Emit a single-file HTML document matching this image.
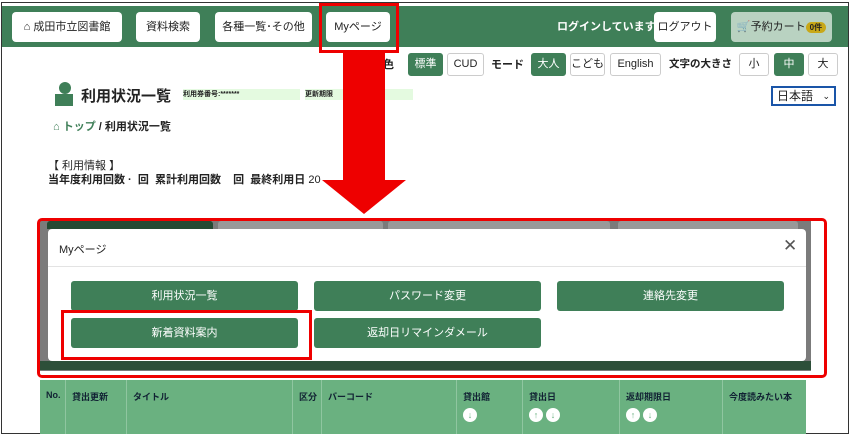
<!DOCTYPE html>
<html><head><meta charset="utf-8"><style>
*{margin:0;padding:0;box-sizing:border-box}
body{width:851px;height:435px;background:#fff;position:relative;overflow:hidden;font-family:"Liberation Sans","Noto Sans CJK JP",sans-serif;color:#222}
.a{position:absolute;white-space:nowrap}
.frame{left:1px;top:2px;width:848px;height:432px;border:1px solid #333}
.hdr{left:2px;top:6px;width:846px;height:41px;background:#3f7f58}
.hb{background:#fff;border-radius:4px;font-size:11px;text-align:center;line-height:30px;height:30px;top:12px;color:#222}
.tb{top:53px;height:23px;border:1px solid #ccc;border-radius:3px;background:#fff;font-size:11px;text-align:center;line-height:21px}
.tb.g{background:#3f7f58;color:#fff;border-color:#3f7f58}
.lbl{font-size:11px;font-weight:bold;top:56px}
.mb{height:30px;background:#3f7f58;color:#fff;border-radius:3px;font-size:11px;text-align:center;line-height:30px;width:227px}
.th{top:380px;height:54px;background:#6ab180;font-size:9px;color:#123;font-weight:bold;padding:10px 0 0 6px;border-right:1px solid #8fc6a0}
.ci{display:inline-block;width:14px;height:14px;border-radius:50%;background:#fff;color:#6ab180;font-size:9px;text-align:center;line-height:14px;margin-right:3px}
</style></head><body>
<div class="a frame"></div>
<div class="a hdr"></div>
<div class="a hb" style="left:12px;width:110px">&#8962; 成田市立図書館</div>
<div class="a hb" style="left:136px;width:64px">資料検索</div>
<div class="a hb" style="left:215px;width:97px">各種一覧･その他</div>
<div class="a hb" style="left:326px;width:64px">Myページ</div>
<div class="a" style="left:319px;top:3px;width:80px;height:50px;border:3px solid #e00"></div>
<div class="a" style="left:557px;top:18px;font-size:11px;font-weight:bold;color:#fff">ログインしています</div>
<div class="a hb" style="left:654px;width:62px">ログアウト</div>
<div class="a hb" style="left:731px;width:101px;background:#b9d2c1;font-size:11px">&#128722;予約カート<span style="background:#c8a818;border-radius:8px;font-size:8px;font-weight:bold;padding:1px 4px">0件</span></div>
<div class="a lbl" style="left:372px">配色</div>
<div class="a tb g" style="left:408px;width:35px">標準</div>
<div class="a tb" style="left:447px;width:37px">CUD</div>
<div class="a lbl" style="left:491px">モード</div>
<div class="a tb g" style="left:531px;width:35px">大人</div>
<div class="a tb" style="left:570px;width:35px">こども</div>
<div class="a tb" style="left:610px;width:51px">English</div>
<div class="a lbl" style="left:669px;font-size:10.5px">文字の大きさ</div>
<div class="a tb" style="left:739px;width:30px">小</div>
<div class="a tb g" style="left:774px;width:30px">中</div>
<div class="a tb" style="left:808px;width:30px">大</div>
<div class="a" style="left:59px;top:82px;width:12px;height:12px;border-radius:50%;background:#3f7f58"></div>
<div class="a" style="left:55px;top:94px;width:18px;height:12px;background:#3f7f58"></div>
<div class="a" style="left:81px;top:85px;font-size:15px;font-weight:bold">利用状況一覧</div>
<div class="a" style="left:183px;top:89px;width:117px;height:11px;background:#e4fae0;font-size:7px;font-weight:bold;line-height:11px">利用券番号:*******</div>
<div class="a" style="left:305px;top:89px;width:108px;height:11px;background:#e4fae0;font-size:7px;font-weight:bold;line-height:11px">更新期限</div>
<div class="a" style="left:771px;top:86px;width:65px;height:20px;border:2px solid #1a55a8;font-size:12px;line-height:16px;padding-left:4px">日本語 <span style="float:right;margin-right:4px;font-size:9px">&#8964;</span></div>
<div class="a" style="left:53px;top:118px;font-size:11px;font-weight:bold"><span style="color:#3f7f58">&#8962; トップ</span> / 利用状況一覧</div>
<div class="a" style="left:48px;top:157px;font-size:11px">【 利用情報 】</div>
<div class="a" style="left:48px;top:171px;font-size:11px;font-weight:bold">当年度利用回数 · &nbsp;回 &nbsp;累計利用回数 &nbsp;&nbsp;&nbsp;回 &nbsp;最終利用日 <span style="font-weight:normal">20</span></div>
<div class="a" style="left:343px;top:53px;width:42px;height:128px;background:#e00"></div>
<div class="a" style="left:322px;top:180px;width:0;height:0;border-left:42px solid transparent;border-right:42px solid transparent;border-top:34px solid #e00"></div>
<div class="a" style="left:40px;top:221px;width:771px;height:150px;background:#7b7b7b"></div>
<div class="a" style="left:47px;top:221px;width:166px;height:8px;background:#254a33;border-radius:3px 3px 0 0"></div>
<div class="a" style="left:218px;top:221px;width:165px;height:8px;background:#999;border-radius:3px 3px 0 0"></div>
<div class="a" style="left:388px;top:221px;width:222px;height:8px;background:#999;border-radius:3px 3px 0 0"></div>
<div class="a" style="left:618px;top:221px;width:180px;height:8px;background:#999;border-radius:3px 3px 0 0"></div>
<div class="a" style="left:40px;top:361px;width:771px;height:9px;background:#2d4f39"></div>
<div class="a" style="left:48px;top:229px;width:758px;height:132px;background:#fff;border-radius:4px"></div>
<div class="a" style="left:48px;top:266px;width:758px;height:1px;background:#e3e3e3"></div>
<div class="a" style="left:59px;top:241px;font-size:11px">Myページ</div>
<div class="a" style="left:783px;top:236px;font-size:17px;color:#555;font-weight:normal">&#10005;</div>
<div class="a mb" style="left:71px;top:281px">利用状況一覧</div>
<div class="a mb" style="left:314px;top:281px">パスワード変更</div>
<div class="a mb" style="left:557px;top:281px">連絡先変更</div>
<div class="a mb" style="left:71px;top:318px">新着資料案内</div>
<div class="a mb" style="left:314px;top:318px">返却日リマインダメール</div>
<div class="a" style="left:61px;top:310px;width:251px;height:50px;border:3px solid #e00"></div>
<div class="a" style="left:37px;top:218px;width:790px;height:160px;border:3px solid #e00;border-radius:5px"></div>
<div class="a th" style="left:40px;width:26px">No.</div>
<div class="a th" style="left:66px;width:61px">貸出更新</div>
<div class="a th" style="left:127px;width:166px">タイトル</div>
<div class="a th" style="left:293px;width:29px">区分</div>
<div class="a th" style="left:322px;width:135px">バーコード</div>
<div class="a th" style="left:457px;width:66px">貸出館<br><span class="ci" style="margin-top:5px">↓</span></div>
<div class="a th" style="left:523px;width:97px">貸出日<br><span class="ci" style="margin-top:5px">↑</span><span class="ci">↓</span></div>
<div class="a th" style="left:620px;width:103px">返却期限日<br><span class="ci" style="margin-top:5px">↑</span><span class="ci">↓</span></div>
<div class="a th" style="left:723px;width:83px;border-right:none">今度読みたい本</div>
</body></html>
